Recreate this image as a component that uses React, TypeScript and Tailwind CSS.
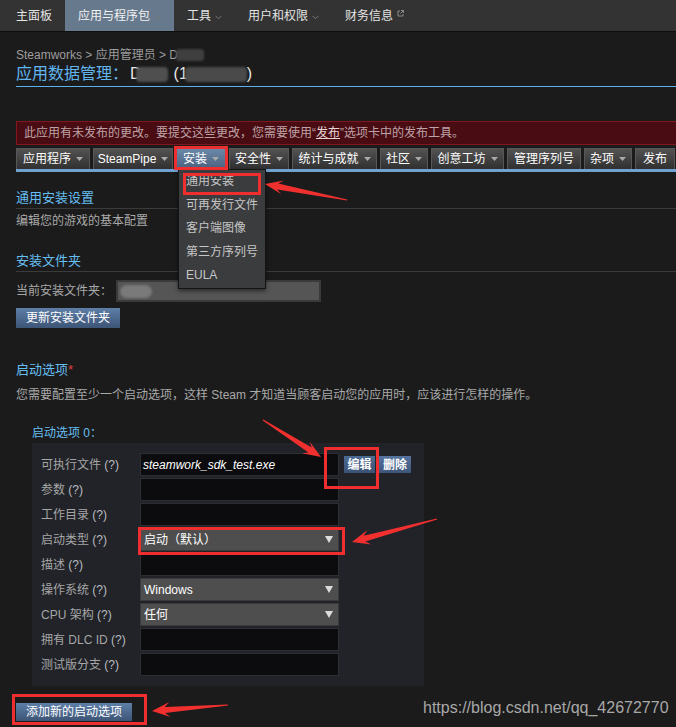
import React from "react";

const Chevron = () => (
  <svg width="7" height="5" viewBox="0 0 7 5" className="ml-[4px] mt-[3px]">
    <path d="M0.5 0.8 L3.5 3.8 L6.5 0.8" fill="none" stroke="#7a7a7a" strokeWidth="1" />
  </svg>
);

const ExtLink = () => (
  <svg width="7" height="7" viewBox="0 0 7 7" className="ml-[4px] mb-[4px]">
    <path d="M3 1 H1 V6 H6 V4" fill="none" stroke="#8a8a8a" strokeWidth="1" />
    <path d="M4 0.5 H6.5 V3 M6.5 0.5 L3.5 3.5" fill="none" stroke="#8a8a8a" strokeWidth="1" />
  </svg>
);

const Caret = () => (
  <svg width="7" height="4" viewBox="0 0 7 4">
    <path d="M0 0 H7 L3.5 4 Z" fill="#a9a9a9" />
  </svg>
);

const SelTri = () => (
  <svg width="8" height="7" viewBox="0 0 8 7">
    <path d="M0 0 H8 L4 7 Z" fill="#dcdcdc" />
  </svg>
);

function arrow(tx: number, ty: number, hx: number, hy: number, hl = 18, hw = 15, nw = 6) {
  const dx = hx - tx;
  const dy = hy - ty;
  const L = Math.hypot(dx, dy);
  const ux = dx / L;
  const uy = dy / L;
  const nx = -uy;
  const ny = ux;
  const bx = hx - ux * hl;
  const by = hy - uy * hl;
  const cx = hx - ux * hl * 0.72;
  const cy = hy - uy * hl * 0.72;
  const p = (x: number, y: number) => `${x.toFixed(1)},${y.toFixed(1)}`;
  return [
    p(tx + nx * 0.6, ty + ny * 0.6),
    p(cx + (nx * nw) / 2, cy + (ny * nw) / 2),
    p(bx + (nx * hw) / 2, by + (ny * hw) / 2),
    p(hx, hy),
    p(bx - (nx * hw) / 2, by - (ny * hw) / 2),
    p(cx - (nx * nw) / 2, cy - (ny * nw) / 2),
    p(tx - nx * 0.6, ty - ny * 0.6),
  ].join(" ");
}

const tabs = [
  { label: "应用程序", caret: true, w: "w-[74px]" },
  { label: "SteamPipe", caret: true, w: "w-[80px]" },
  { label: "安装", caret: true, w: "w-[50px]", active: true },
  { label: "安全性", caret: true, w: "w-[60px]" },
  { label: "统计与成就", caret: true, w: "w-[85px]" },
  { label: "社区", caret: true, w: "w-[48px]" },
  { label: "创意工坊", caret: true, w: "w-[73px]" },
  { label: "管理序列号", caret: false, w: "w-[74px]" },
  { label: "杂项", caret: true, w: "w-[48px]" },
  { label: "发布", caret: false, w: "w-[40px]" },
];

const Box = ({ className }: { className: string }) => (
  <div className={`pointer-events-none absolute z-20 border-[3px] border-[#ef2f2f] ${className}`} />
);

const Label = ({ text }: { text: string }) => (
  <div className="w-[99px] shrink-0 whitespace-nowrap text-[12px] text-[#a6a6a6]">
    {text} <span className="text-[#b9bcc0]">(?)</span>
  </div>
);

const TextInput = ({ children }: { children?: React.ReactNode }) => (
  <div className="flex h-[23px] w-[199px] shrink-0 items-center border border-[#2c2e33] bg-[#0c0c0e] pl-[2px]">
    {children}
  </div>
);

const Select = ({ value }: { value: string }) => (
  <div className="flex h-[23px] w-[199px] shrink-0 items-center justify-between border border-[#3a3a3a] bg-[#4e4e4e] pl-[3px] pr-[5px] text-[12px] text-white">
    <span>{value}</span>
    <SelTri />
  </div>
);

export default function App() {
  return (
    <div className="relative h-[727px] w-[676px] overflow-hidden bg-[#1b1b1b] font-['Liberation_Sans','Noto_Sans_CJK_SC',sans-serif] text-[12px]">
      {/* top nav */}
      <div className="flex h-[32px] items-stretch border-b border-[#0e0e0e] bg-[#333333] pl-[3px] text-[12px] text-[#e4e4e4]">
        <div className="flex items-center px-[13px]">主面板</div>
        <div className="flex items-center bg-[#67798c] px-[13px] text-[#f2f2f2]">
          应用与程序包
          <Chevron />
        </div>
        <div className="flex items-center px-[13px]">
          工具
          <Chevron />
        </div>
        <div className="flex items-center px-[13px]">
          用户和权限
          <Chevron />
        </div>
        <div className="flex items-center px-[13px]">
          财务信息
          <ExtLink />
        </div>
      </div>

      <div className="w-[720px] pl-[16px]">
        {/* breadcrumb */}
        <div className="mt-[15px] flex items-center leading-[16px] text-[12px] text-[#9d9d9d]">
          Steamworks &gt; 应用管理员 &gt; D
          <span className="-ml-[2px] inline-block h-[12px] w-[28px] rounded-[3px] bg-[#3f3f3f] blur-[1px]" />
        </div>
        {/* title */}
        <div className="mt-[1px] flex items-center border-b border-[#5cb0ee] pb-[2px] text-[16px] leading-[20px] text-[#62b6f0]">
          应用数据管理<span className="mr-[2px]">：</span>
          <span className="text-[#e8e8e8]">D</span>
          <span className="-ml-[6px] inline-block h-[15px] w-[32px] rounded-[4px] bg-[#4f4f4f] blur-[1px]" />
          <span className="ml-[6px] text-[#e8e8e8]">(1</span>
          <span className="-ml-[3px] inline-block h-[15px] w-[62px] rounded-[4px] bg-[#4a4a4a] blur-[1px]" />
          <span className="text-[#e8e8e8]">)</span>
        </div>

        {/* banner */}
        <div className="mt-[34px] flex h-[24px] items-center border border-[#82161f] bg-[#4a0c13] pl-[7px] text-[12px] text-[#bda3a6]">
          此应用有未发布的更改。要提交这些更改，您需要使用“<span className="text-[#e6d6d6] underline">发布</span>”选项卡中的发布工具。
        </div>

        {/* tabs */}
        <div className="mt-[3px] flex gap-[3px]">
          {tabs.map((t) => (
            <div key={t.label} className="relative shrink-0">
              <div
                className={`flex h-[21px] ${t.w} items-center justify-center gap-[5px] border border-b-0 text-[12px] text-white ${
                  t.active
                    ? "border-[#6f8aa8] bg-linear-to-b from-[#6c88a8] to-[#4a6280]"
                    : "border-[#575757] bg-linear-to-b from-[#535353] to-[#303030]"
                }`}
              >
                <span>{t.label}</span>
                {t.caret && <Caret />}
              </div>
              {t.active && (
                <>
                  <Box className="-left-[2px] -right-[2px] -top-[2px] -bottom-[1px]" />
                  <div className="absolute left-[2px] top-[21px] z-10 w-[88px] border border-[#141414] bg-[#3b3c3e] px-[7px] text-[12px] leading-[23.5px] text-[#c6c6c6] shadow-[0_2px_4px_rgba(0,0,0,0.5)]">
                    <div className="relative">
                      通用安装
                      <Box className="-left-[3px] -right-[3px] top-[3px] bottom-[-1px]" />
                    </div>
                    <div>可再发行文件</div>
                    <div>客户端图像</div>
                    <div>第三方序列号</div>
                    <div>EULA</div>
                  </div>
                </>
              )}
            </div>
          ))}
        </div>
        <div className="h-[3px] bg-[#71a1d0]" />

        {/* general install */}
        <div className="mt-[17px] border-b border-[#3b3b3b] pb-[1px] text-[13px] leading-[18px] text-[#66bff2]">通用安装设置</div>
        <div className="mt-[4px] leading-[16px] text-[#a9a9a9]">编辑您的游戏的基本配置</div>

        <div className="mt-[23px] border-b border-[#3b3b3b] pb-[1px] text-[13px] leading-[18px] text-[#66bff2]">安装文件夹</div>
        <div className="mt-[8px] flex items-center">
          <span className="text-[#a9a9a9]">当前安装文件夹</span>
          <span className="w-[12px] text-center text-[#a9a9a9]">：</span>
          <div className="ml-[4px] flex h-[22px] w-[205px] items-center border-2 border-[#3a3a3a] bg-[#555555] pl-[2px]">
            <span className="inline-block h-[13px] w-[32px] rounded-full bg-[#7a7a7a] blur-[1px]" />
          </div>
        </div>
        <div className="mt-[6px] flex h-[20px] w-[104px] items-center justify-center bg-linear-to-b from-[#5e7fa8] to-[#3d5576] text-[12px] text-white">
          更新安装文件夹
        </div>

        {/* launch options */}
        <div className="mt-[33px] text-[13px] leading-[18px] text-[#66bff2]">
          启动选项<span className="text-[#e04040]">*</span>
        </div>
        <div className="mt-[8px] leading-[16px] text-[#a9a9a9]">
          您需要配置至少一个启动选项，这样 Steam 才知道当顾客启动您的应用时，应该进行怎样的操作。
        </div>
        <div className="ml-[16px] mt-[22px] leading-[16px] text-[#66bff2]">启动选项 0：</div>

        <div className="ml-[16px] mt-[2px] flex w-[392px] flex-col gap-[2px] bg-[#212328] py-[10px] pl-[9px]">
          <div className="flex items-center">
            <Label text="可执行文件" />
            <TextInput>
              <span className="italic text-white">steamwork_sdk_test.exe</span>
            </TextInput>
            <div className="relative ml-[5px] flex h-[17px] w-[31px] items-center justify-center bg-linear-to-b from-[#4d6b92] to-[#3a5275] font-bold text-white">
              编辑
              <Box className="-left-[20px] -right-[4px] -top-[9px] -bottom-[16px]" />
            </div>
            <div className="ml-[4px] flex h-[17px] w-[32px] items-center justify-center bg-linear-to-b from-[#5574a0] to-[#3e5679] font-bold text-white">
              删除
            </div>
          </div>
          <div className="flex items-center">
            <Label text="参数" />
            <TextInput />
          </div>
          <div className="flex items-center">
            <Label text="工作目录" />
            <TextInput />
          </div>
          <div className="flex items-center">
            <Label text="启动类型" />
            <div className="relative">
              <Select value="启动（默认）" />
              <Box className="-left-[2px] -right-[6px] -top-[1px] -bottom-[4px]" />
            </div>
          </div>
          <div className="flex items-center">
            <Label text="描述" />
            <TextInput />
          </div>
          <div className="flex items-center">
            <Label text="操作系统" />
            <Select value="Windows" />
          </div>
          <div className="flex items-center">
            <Label text="CPU 架构" />
            <Select value="任何" />
          </div>
          <div className="flex items-center">
            <Label text="拥有 DLC ID" />
            <TextInput />
          </div>
          <div className="flex items-center">
            <Label text="测试版分支" />
            <TextInput />
          </div>
        </div>

        <div className="relative mt-[17px] flex h-[18px] w-[116px] items-center justify-center bg-linear-to-b from-[#5e7fa8] to-[#3d5576] text-[12px] text-white">
          添加新的启动选项
          <Box className="-left-[4px] -right-[15px] -top-[9px] -bottom-[4px]" />
        </div>
      </div>

      {/* watermark */}
      <div className="absolute left-[423px] top-[698px] font-['Liberation_Sans',sans-serif] text-[16px] leading-[20px] text-[#a8a8a8]">
        https://blog.csdn.net/qq_42672770
      </div>

      {/* annotation arrows */}
      <svg className="pointer-events-none absolute left-0 top-0 z-30" width="676" height="727" viewBox="0 0 676 727">
        <polygon points={arrow(347, 200, 265, 184, 18, 14, 6)} fill="#f0302f" />
        <polygon points={arrow(263, 420, 321, 457, 18, 14, 6)} fill="#f0302f" />
        <polygon points={arrow(437, 519, 352, 542, 18, 15, 6)} fill="#f0302f" />
        <polygon points={arrow(228, 705, 152, 711, 18, 15, 6)} fill="#f0302f" />
      </svg>
    </div>
  );
}
